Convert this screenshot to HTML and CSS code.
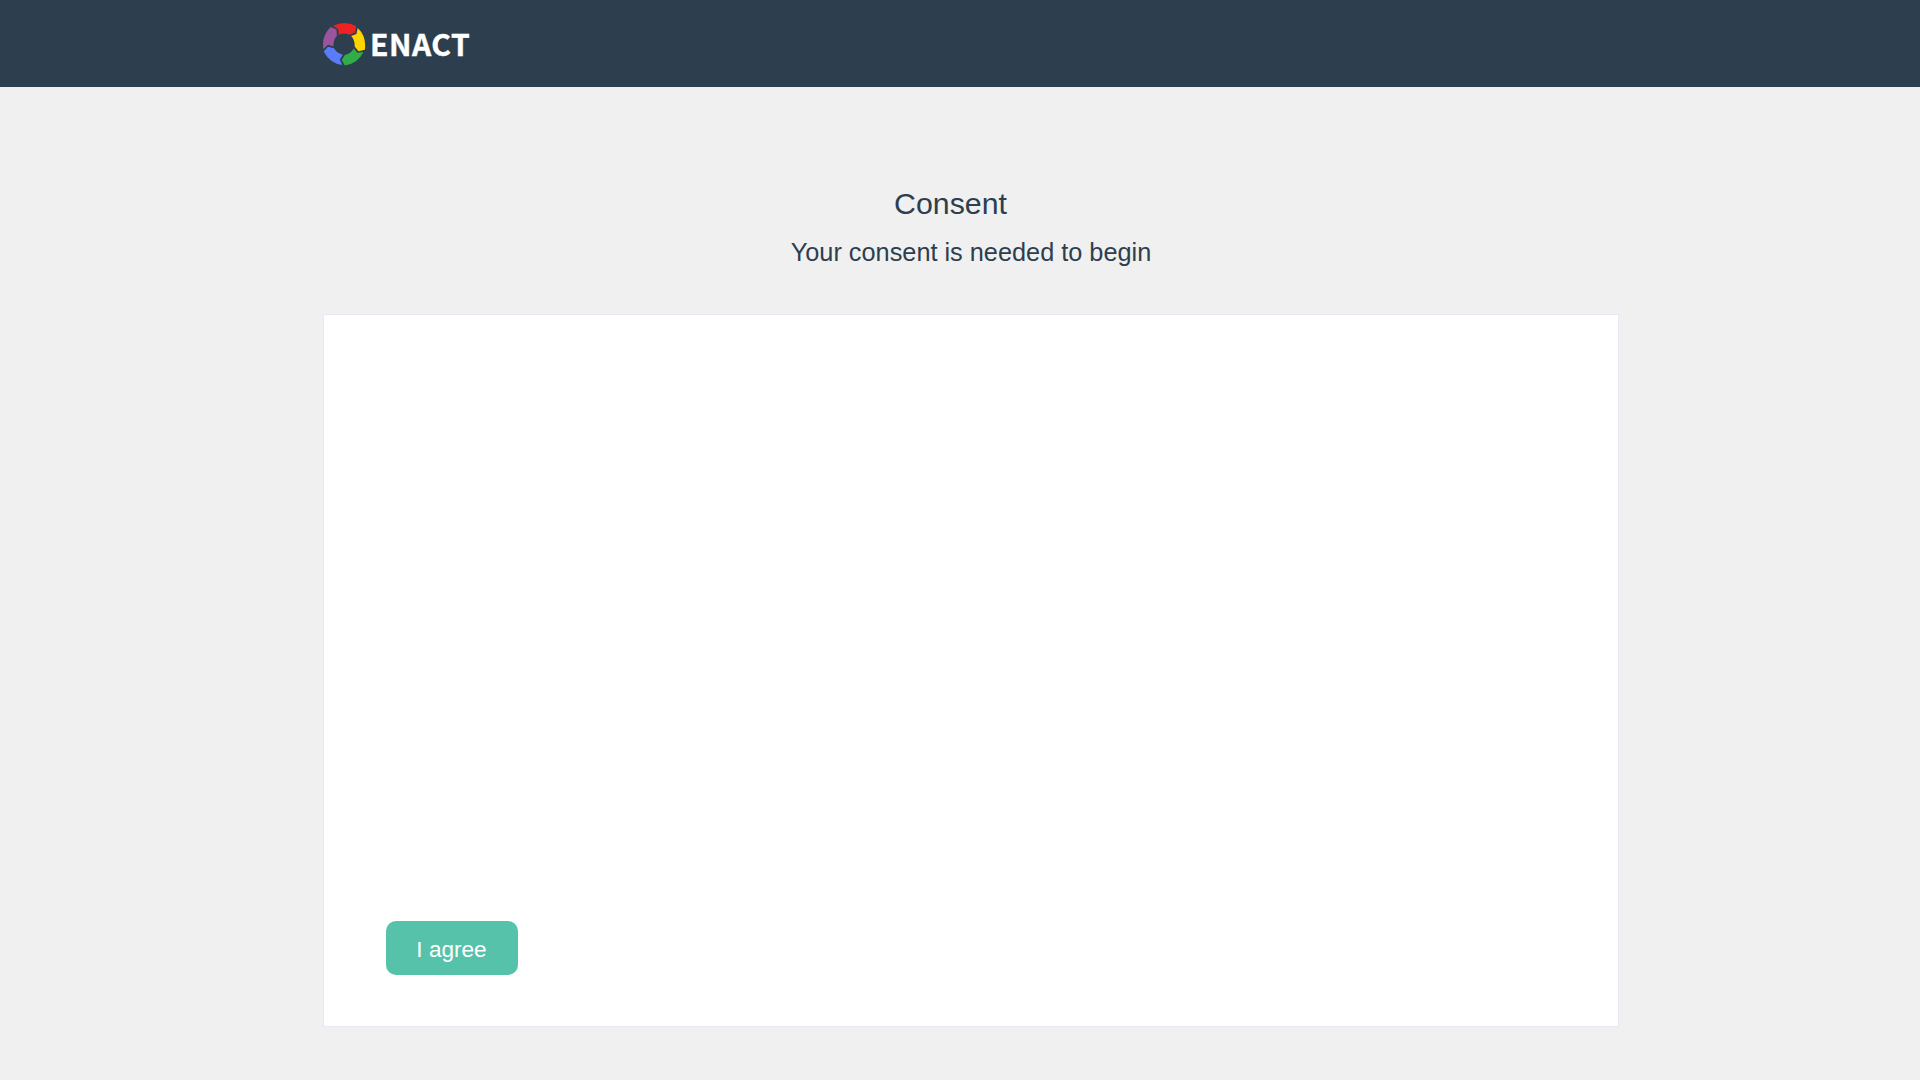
FILE: index.html
```html
<!DOCTYPE html>
<html lang="en">
<head>
<meta charset="utf-8">
<title>Enact</title>
<link rel="stylesheet" href="styles.css">
</head>
<body>
<header class="header">
  <div class="brand">
    <svg class="brand-icon" viewBox="-66 -66 132 132" aria-hidden="true">
      <defs><path id="segment" d="M-33 -54Q0 -72 36 -54L34 -35L17 -28Q0 -35 -16 -28L-17 -45Z"/></defs>
      <use href="#segment" fill="#ee2222"/>
      <use href="#segment" fill="#ffd500" transform="rotate(72)"/>
      <use href="#segment" fill="#32ab49" transform="rotate(144)"/>
      <use href="#segment" fill="#5b7cfa" transform="rotate(216)"/>
      <use href="#segment" fill="#9b559f" transform="rotate(288)"/>
    </svg>
    <span class="brand-name">ENACT</span>
  </div>
</header>
<main class="main">
  <h1 class="title">Consent</h1>
  <p class="subtitle">Your consent is needed to begin</p>
  <section class="card">
    <button class="agree" type="button">I agree</button>
  </section>
</main>
</body>
</html>
```
FILE: styles.css
```css
* { box-sizing: border-box; }
body {
  margin: 0;
  height: 100vh;
  overflow: hidden;
  background: #f0f0f0;
  color: #2d3e4f;
  font-family: "Liberation Sans", Arial, sans-serif;
}
.header {
  height: 87px;
  padding-left: 322px;
  background: #2d3e4f;
}
.brand {
  display: flex;
  align-items: center;
  height: 88px;
}
.brand-icon { width: 44px; height: 44px; }
.brand-name {
  margin-left: 4px;
  padding-bottom: 3px;
  color: #fff;
  font: 700 30px/44px "Noto Sans CJK SC", sans-serif;
  letter-spacing: 0.5px;
  -webkit-text-stroke: 0.4px #fff;
}
.main {
  width: 1296px;
  margin-left: 323px;
  padding-top: 98px;
}
.title {
  margin: 0;
  padding-right: 41px;
  font-size: 30.3px;
  font-weight: 400;
  line-height: 38px;
  text-align: center;
}
.subtitle {
  margin: 10px 0 0;
  font-size: 25.3px;
  line-height: 38px;
  text-align: center;
}
.card {
  display: flex;
  align-items: flex-end;
  height: 713px;
  margin-top: 43px;
  padding: 0 62px 51px;
  border: 1px solid #e6e8f6;
  background: #fff;
}
.agree {
  width: 132px;
  height: 54px;
  padding: 4px 1px 0 0;
  border: 0;
  border-radius: 10px;
  background: #56c2aa;
  color: #fff;
  font: 22.6px/1 "Liberation Sans", Arial, sans-serif;
}
```
